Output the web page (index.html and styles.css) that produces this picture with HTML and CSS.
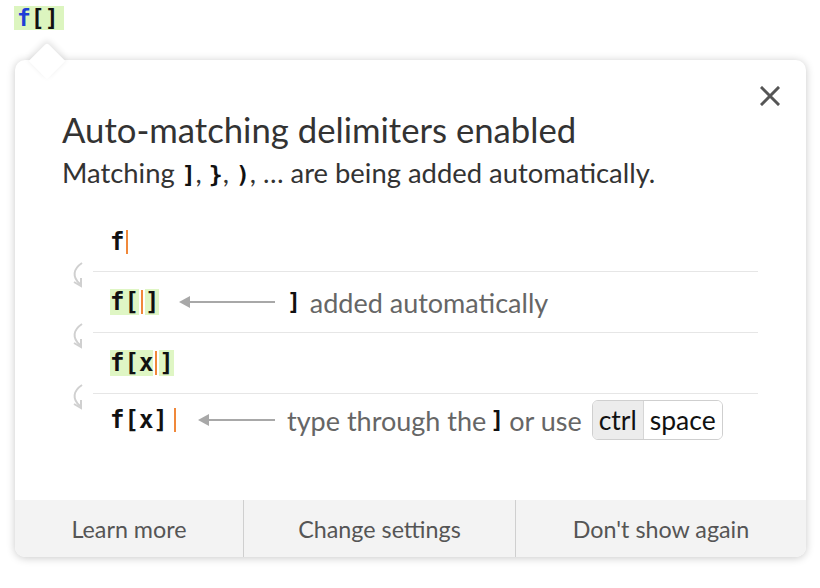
FILE: index.html
```html
<!DOCTYPE html>
<html>
<head>
<meta charset="utf-8">
<link rel="stylesheet" href="styles.css">
</head>
<body>
<div class="page">
  <div class="input-cell"><span class="hl"><span class="fn">f</span>[]</span></div>
  <div class="popup">
    <div class="notch"></div>
    <button class="close" aria-label="Close">
      <svg width="20" height="20" viewBox="0 0 20 20"><path d="M2 2 L18 18 M18 2 L2 18" stroke="#555" stroke-width="3" stroke-linecap="square"/></svg>
    </button>
    <div class="content">
      <h1 class="title">Auto-matching delimiters enabled</h1>
      <p class="subtitle">Matching <code class="mono">]</code>, <code class="mono">}</code>, <code class="mono">)</code>, … are being added automatically.</p>
      <div class="steps">
        <div class="step">
          <span class="code">f<span class="cursor"></span></span>
        </div>
        <div class="step">
          <svg class="curve" width="22" height="28" viewBox="0 0 22 28"><path d="M14 2 C5 8 4 16 12 23" fill="none" stroke="#d0d0d0" stroke-width="2"/><path d="M6 21 L13 25 L13 17" fill="none" stroke="#d0d0d0" stroke-width="2"/></svg>
          <span class="lead">
            <span class="code"><span class="hl">f[</span><span class="cursor"></span><span class="hl">]</span></span>
            <span class="arrow"></span>
          </span>
          <span class="note"><code class="mono">]</code> added automatically</span>
        </div>
        <div class="step">
          <svg class="curve" width="22" height="28" viewBox="0 0 22 28"><path d="M14 2 C5 8 4 16 12 23" fill="none" stroke="#d0d0d0" stroke-width="2"/><path d="M6 21 L13 25 L13 17" fill="none" stroke="#d0d0d0" stroke-width="2"/></svg>
          <span class="code"><span class="hl">f[x</span><span class="cursor"></span><span class="hl">]</span></span>
        </div>
        <div class="step">
          <svg class="curve" width="22" height="28" viewBox="0 0 22 28"><path d="M14 2 C5 8 4 16 12 23" fill="none" stroke="#d0d0d0" stroke-width="2"/><path d="M6 21 L13 25 L13 17" fill="none" stroke="#d0d0d0" stroke-width="2"/></svg>
          <span class="lead">
            <span class="code">f[x]<span class="cursor gap"></span></span>
            <span class="arrow"></span>
          </span>
          <span class="note">type through the<code class="mono mid">]</code>or use<span class="kbd"><span class="key ctrl">ctrl</span><span class="key">space</span></span></span>
        </div>
      </div>
    </div>
    <div class="footer">
      <button class="fbtn">Learn more</button>
      <button class="fbtn">Change settings</button>
      <button class="fbtn">Don't show again</button>
    </div>
  </div>
</div>
</body>
</html>
```
FILE: styles.css
```css
* { box-sizing: border-box; }
html, body { margin: 0; padding: 0; background: #fff; }
body { font-family: Lato, "Open Sans", sans-serif; color: #333; }
.page { width: 820px; height: 588px; position: relative; overflow: hidden; }

.input-cell {
  padding: 6px 0 0 14px;
  height: 30px;
  font-family: "DejaVu Sans Mono", monospace;
  font-weight: bold;
  font-size: 23px;
  line-height: 24px;
  color: #111;
}
.input-cell .hl { background: #dcf5bf; display: inline-block; padding: 0 5px 0 3px; }
.fn { color: #1f3fd6; }

.popup {
  position: relative;
  margin: 30px 0 0 15px;
  width: 791px;
  height: 497px;
  background: #fff;
  border-radius: 10px;
  box-shadow: 0 1px 8px rgba(0,0,0,0.22);
  display: flex;
  flex-direction: column;
}
.notch {
  position: absolute;
  left: 19px;
  top: -12px;
  width: 26px;
  height: 26px;
  background: #fff;
  transform: rotate(45deg);
  box-shadow: -2px -2px 6px rgba(0,0,0,0.12);
  border-radius: 3px 0 0 0;
}
.close {
  position: absolute;
  right: 26px;
  top: 26px;
  border: 0;
  background: none;
  padding: 0;
  width: 20px;
  height: 20px;
  cursor: pointer;
}
.content { position: relative; flex: 1; padding: 50px 48px 0 47px; }
.title {
  margin: 0;
  font-weight: normal;
  font-size: 34.7px;
  line-height: 40px;
  color: #333;
}
.subtitle {
  margin: 8px 0 0;
  font-size: 27.4px;
  line-height: 30px;
  color: #333;
}
.mono {
  font-family: "DejaVu Sans Mono", monospace;
  font-weight: bold;
  font-size: 23px;
  color: #111;
}
.steps { margin: 23px 0 0 31px; }
.step {
  position: relative;
  height: 61px;
  display: flex;
  align-items: center;
  padding-left: 17px;
  border-top: 1px solid #e6e6e6;
}
.step:first-child { border-top: 0; height: 58px; }
.step:last-child { height: 58px; padding-bottom: 5px; }
.curve { position: absolute; left: -25px; top: -11px; }
.lead { display: flex; align-items: center; width: 177px; }
.code {
  font-family: "DejaVu Sans Mono", monospace;
  font-weight: bold;
  font-size: 24px;
  line-height: 26px;
  color: #111;
  display: inline-flex;
  align-items: center;
}
.code .hl { background: #dff6c4; }
.cursor {
  display: inline-block;
  width: 2px;
  height: 24px;
  background: #f0883a;
  margin: 0 2px;
}
.cursor.gap { margin-left: 6px; }
.arrow {
  position: relative;
  flex: 1;
  height: 2px;
  background: #a8a8a8;
  margin: 0 12px 0 22px;
}
.arrow::before {
  content: "";
  position: absolute;
  left: -2px;
  top: -5px;
  border-right: 11px solid #a8a8a8;
  border-top: 6px solid transparent;
  border-bottom: 6px solid transparent;
}
.note { font-size: 27px; color: #666; display: inline-flex; align-items: center; white-space: pre; }
.note .mono { margin-right: 2px; }
.note .mono.mid { margin: 0 5px 0 4px; }
.kbd {
  display: inline-flex;
  margin-left: 10px;
  border: 1px solid #cfcfcf;
  border-radius: 6px;
  overflow: hidden;
  height: 40px;
  align-items: stretch;
}
.key { padding: 0 6px; display: flex; align-items: center; color: #111; background: #fff; font-size: 26.5px; }
.key.ctrl { background: #ececec; border-right: 1px solid #d6d6d6; }

.footer {
  display: grid;
  grid-template-columns: 228px 272px 1fr;
  height: 57px;
  background: #f3f3f3;
  border-radius: 0 0 10px 10px;
  overflow: hidden;
}
.fbtn {
  border: 0;
  background: none;
  font-family: inherit;
  font-size: 23.3px;
  color: #555;
  border-left: 1px solid #cfcfcf;
  cursor: pointer;
}
.fbtn:first-child { border-left: 0; }
```
